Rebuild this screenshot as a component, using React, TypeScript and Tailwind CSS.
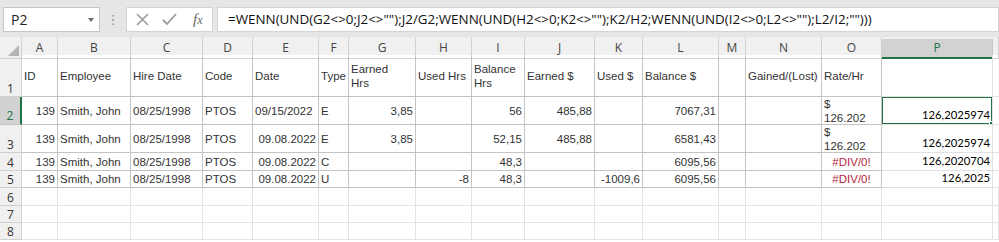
import React from "react";

const COLS = "grid grid-cols-[22px_36px_73px_72px_50px_66px_30px_67px_56px_53px_70px_48px_76px_27px_76px_60px_111px_1fr]";
const LETTERS = ["A", "B", "C", "D", "E", "F", "G", "H", "I", "J", "K", "L", "M", "N", "O", "P", ""];

type Cell = { t?: string[]; a?: "l" | "r" | "c"; red?: boolean };

const rows: { n: string; h: string; cells: Cell[] }[] = [
    {
        n: "1",
        h: "h-[42px]",
        cells: [
            { t: ["ID"] }, { t: ["Employee"] }, { t: ["Hire Date"] }, { t: ["Code"] }, { t: ["Date"] }, { t: ["Type"] },
            { t: ["Earned", "Hrs"] }, { t: ["Used Hrs"] }, { t: ["Balance", "Hrs"] }, { t: ["Earned $"] },
            { t: ["Used $"] }, { t: ["Balance $"] }, {}, { t: ["Gained/(Lost)"] }, { t: ["Rate/Hr"] }, {},
        ],
    },
    {
        n: "2",
        h: "h-[28px]",
        cells: [
            { t: ["139"], a: "r" }, { t: ["Smith, John"] }, { t: ["08/25/1998"] }, { t: ["PTOS"] }, { t: ["09/15/2022"] }, { t: ["E"] },
            { t: ["3,85"], a: "r" }, {}, { t: ["56"], a: "r" }, { t: ["485,88"], a: "r" },
            {}, { t: ["7067,31"], a: "r" }, {}, {}, { t: ["$", "126.202"] }, { t: ["126,2025974"], a: "r" },
        ],
    },
    {
        n: "3",
        h: "h-[28px]",
        cells: [
            { t: ["139"], a: "r" }, { t: ["Smith, John"] }, { t: ["08/25/1998"] }, { t: ["PTOS"] }, { t: ["09.08.2022"], a: "r" }, { t: ["E"] },
            { t: ["3,85"], a: "r" }, {}, { t: ["52,15"], a: "r" }, { t: ["485,88"], a: "r" },
            {}, { t: ["6581,43"], a: "r" }, {}, {}, { t: ["$", "126.202"] }, { t: ["126,2025974"], a: "r" },
        ],
    },
    {
        n: "4",
        h: "h-[18px]",
        cells: [
            { t: ["139"], a: "r" }, { t: ["Smith, John"] }, { t: ["08/25/1998"] }, { t: ["PTOS"] }, { t: ["09.08.2022"], a: "r" }, { t: ["C"] },
            {}, {}, { t: ["48,3"], a: "r" }, {},
            {}, { t: ["6095,56"], a: "r" }, {}, {}, { t: ["#DIV/0!"], a: "c", red: true }, { t: ["126,2020704"], a: "r" },
        ],
    },
    {
        n: "5",
        h: "h-[17px]",
        cells: [
            { t: ["139"], a: "r" }, { t: ["Smith, John"] }, { t: ["08/25/1998"] }, { t: ["PTOS"] }, { t: ["09.08.2022"], a: "r" }, { t: ["U"] },
            {}, { t: ["-8"], a: "r" }, { t: ["48,3"], a: "r" }, {},
            { t: ["-1009,6"], a: "r" }, { t: ["6095,56"], a: "r" }, {}, {}, { t: ["#DIV/0!"], a: "c", red: true }, { t: ["126,2025"], a: "r" },
        ],
    },
];

const emptyRows = [
    { n: "6", h: "h-[18px]" },
    { n: "7", h: "h-[17px]" },
    { n: "8", h: "h-[17px]" },
];

function DataCell({ c, col, row }: { c: Cell; col: number; row: number }) {
    const isP = col === 15;
    const border = isP ? "border-[#e1e1e1]" : "border-[#c4c4c4]";
    const align = c.a === "r" ? "justify-end text-right" : c.a === "c" ? "justify-center text-center" : "justify-start text-left";
    const font = isP
        ? "font-['Lato',sans-serif] text-[11.3px] text-black items-end pb-[2px]"
        : "font-['Liberation_Sans',Arial,sans-serif] text-[11.5px] text-[#333] items-center";
    const selected = isP && row === 2;
    return (
        <div className={`relative flex min-w-0 overflow-hidden border-r border-b ${border} ${align} ${font} px-[2px] leading-[14px]`}>
            <div className={`flex flex-col whitespace-nowrap ${c.red ? "text-[#b3263b]" : ""}`}>
                {c.t?.map((line, i) => (
                    <span key={i}>{line}</span>
                ))}
            </div>
            {selected && (
                <>
                    <div className="absolute -inset-[1px] border-2 border-[#217346]" />
                    <div className="absolute right-[-2px] bottom-[-2px] w-[5px] h-[5px] bg-[#217346] border border-white" />
                </>
            )}
        </div>
    );
}

export default function App() {
    return (
        <div className="w-[999px] h-[242px] overflow-hidden bg-white select-none">
            {/* formula toolbar */}
            <div className="h-[37px] bg-[#e6e6e6] flex items-start pt-[7px] pl-[3px]">
                <div className="w-[97px] h-[25px] bg-white border border-[#c6c6c6] flex items-center justify-between pl-[7px] pr-[5px]">
                    <span className="font-['Open_Sans',sans-serif] text-[14px] text-[#222]">P2</span>
                    <span className="w-0 h-0 border-l-[3px] border-r-[3px] border-t-[4px] border-l-transparent border-r-transparent border-t-[#6b6b6b]" />
                </div>
                <div className="w-[26px] h-[25px] flex items-center justify-center text-[#8a8a8a] text-[13px] font-['DejaVu_Sans',sans-serif]">⋮</div>
                <div className="w-[87px] h-[25px] bg-white border border-[#d4d4d4] flex items-center pl-[9px] gap-[13px]">
                    <svg width="13" height="13" viewBox="0 0 13 13" stroke="#9a9a9a" strokeWidth="1.6" fill="none">
                        <path d="M1 1 L12 12 M12 1 L1 12" />
                    </svg>
                    <svg width="15" height="13" viewBox="0 0 15 13" stroke="#9a9a9a" strokeWidth="1.8" fill="none">
                        <path d="M1 7 L5 11 L14 1" />
                    </svg>
                    <span className="font-['Liberation_Serif',serif] italic text-[15px] text-[#666] ml-[3px]">
                        f<span className="text-[12px]">x</span>
                    </span>
                </div>
                <div className="flex-1 ml-[4px] h-[25px] bg-white border border-[#d4d4d4] flex items-center pl-[10px]">
                    <span className="font-['Open_Sans',sans-serif] text-[13.4px] text-[#111] whitespace-nowrap">
                        =WENN(UND(G2&lt;&gt;0;J2&lt;&gt;"");J2/G2;WENN(UND(H2&lt;&gt;0;K2&lt;&gt;"");K2/H2;WENN(UND(I2&lt;&gt;0;L2&lt;&gt;"");L2/I2;"")))
                    </span>
                </div>
            </div>

            {/* column headers */}
            <div className={`${COLS} h-[18px] bg-[#f0f0f0] font-['Open_Sans',sans-serif] text-[12px] text-[#444]`}>
                <div className="relative border-r border-b border-[#d0d0d0]">
                    <svg className="absolute right-[2px] bottom-[2px]" width="11" height="11" viewBox="0 0 11 11">
                        <path d="M11 0 L11 11 L0 11 Z" fill="#b4b4b4" />
                    </svg>
                </div>
                {LETTERS.map((l, i) =>
                    l === "P" ? (
                        <div key={i} className="flex items-center justify-center bg-[#d2d2d2] border-r border-[#c6c6c6] border-b-2 border-b-[#217346] text-[#217346] mt-[2px]">
                            {l}
                        </div>
                    ) : (
                        <div key={i} className="flex items-center justify-center border-r border-b border-[#d0d0d0] leading-none">
                            {l}
                        </div>
                    )
                )}
            </div>

            {/* data rows */}
            {rows.map((r, ri) => (
                <div key={r.n} className={`${COLS} ${r.h}`}>
                    {r.n === "2" ? (
                        <div className="flex items-end justify-center pb-[2px] bg-[#d2d2d2] border-r-2 border-r-[#217346] border-b border-b-[#c6c6c6] font-['Open_Sans',sans-serif] text-[12px] text-[#217346] leading-none">
                            {r.n}
                        </div>
                    ) : (
                        <div className="flex items-end justify-center pb-[1px] bg-[#f0f0f0] border-r border-b border-[#d0d0d0] font-['Open_Sans',sans-serif] text-[12px] text-[#333] leading-none">
                            {r.n}
                        </div>
                    )}
                    {r.cells.map((c, ci) => (
                        <DataCell key={ci} c={c} col={ci} row={ri + 1} />
                    ))}
                    <div className="border-b border-[#e1e1e1]" />
                </div>
            ))}

            {emptyRows.map((r) => (
                <div key={r.n} className={`${COLS} ${r.h}`}>
                    <div className="flex items-end justify-center pb-[1px] bg-[#f0f0f0] border-r border-b border-[#d0d0d0] font-['Open_Sans',sans-serif] text-[12px] text-[#333] leading-none">
                        {r.n}
                    </div>
                    {LETTERS.map((_, i) => (
                        <div key={i} className="border-r border-b border-[#e4e4e4]" />
                    ))}
                </div>
            ))}
        </div>
    );
}
